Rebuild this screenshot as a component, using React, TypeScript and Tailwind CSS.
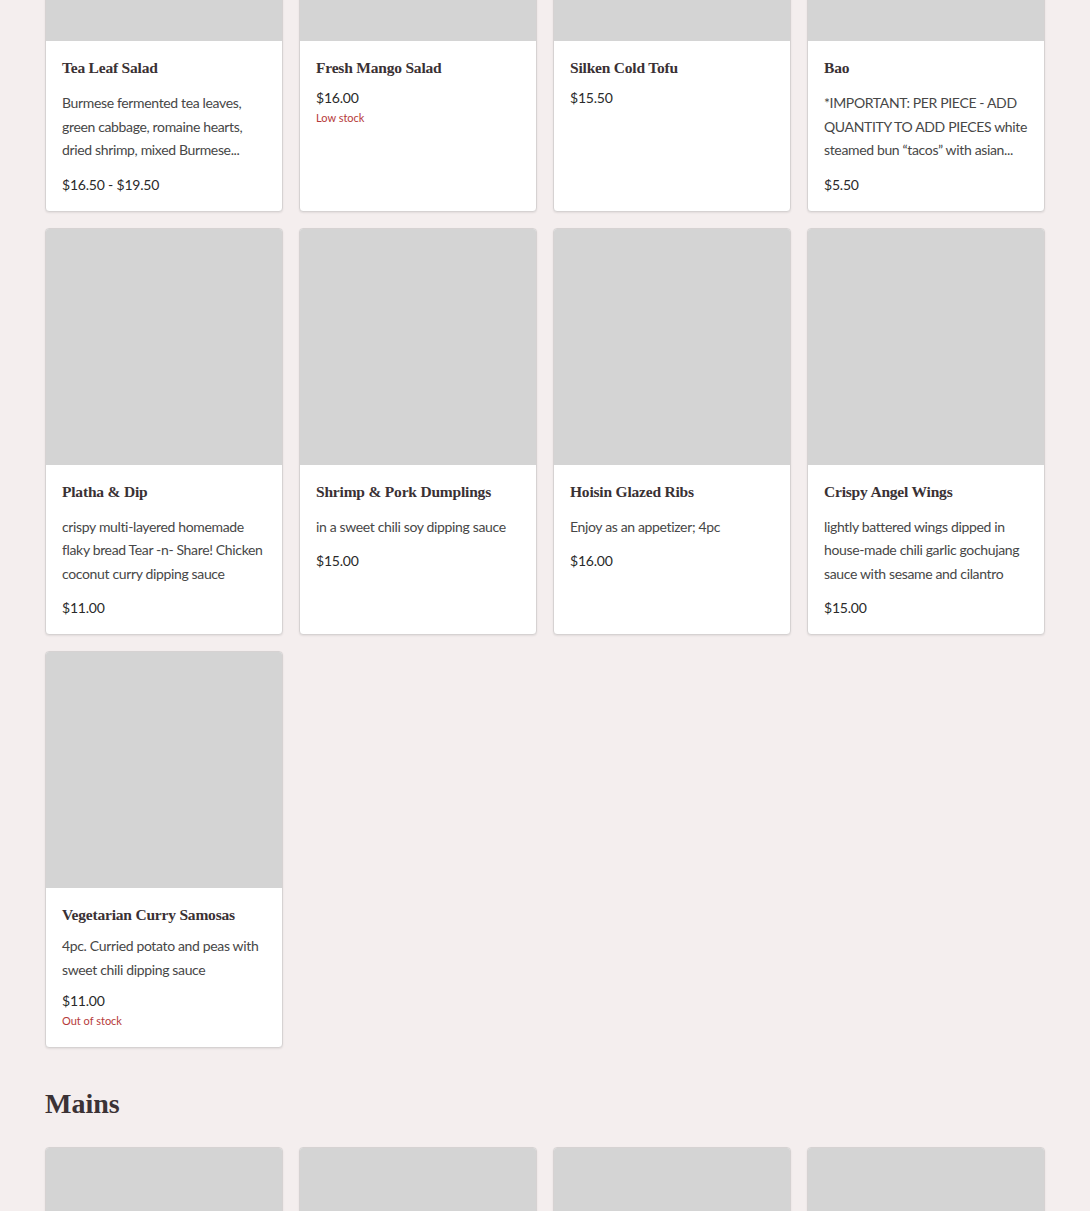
import React from "react";

type Item = {
  name: string;
  description?: string;
  price: string;
  stock?: string;
  tight?: boolean;
};

const starters: Item[] = [
  {
    name: "Tea Leaf Salad",
    description:
      "Burmese fermented tea leaves, green cabbage, romaine hearts, dried shrimp, mixed Burmese...",
    price: "$16.50 - $19.50",
  },
  { name: "Fresh Mango Salad", price: "$16.00", stock: "Low stock" },
  { name: "Silken Cold Tofu", price: "$15.50" },
  {
    name: "Bao",
    description:
      "*IMPORTANT: PER PIECE - ADD QUANTITY TO ADD PIECES white steamed bun “tacos” with asian...",
    price: "$5.50",
  },
  {
    name: "Platha & Dip",
    description:
      "crispy multi-layered homemade flaky bread Tear -n- Share! Chicken coconut curry dipping sauce",
    price: "$11.00",
  },
  {
    name: "Shrimp & Pork Dumplings",
    description: "in a sweet chili soy dipping sauce",
    price: "$15.00",
  },
  {
    name: "Hoisin Glazed Ribs",
    description: "Enjoy as an appetizer; 4pc",
    price: "$16.00",
  },
  {
    name: "Crispy Angel Wings",
    description:
      "lightly battered wings dipped in house-made chili garlic gochujang sauce with sesame and cilantro",
    price: "$15.00",
  },
  {
    name: "Vegetarian Curry Samosas",
    description: "4pc. Curried potato and peas with sweet chili dipping sauce",
    price: "$11.00",
    stock: "Out of stock",
    tight: true,
  },
];

const mains: Item[] = [
  { name: "Garlic Noodles", price: "$18.00" },
  { name: "Nan Gyi Thoke", price: "$19.00" },
  { name: "Coconut Chicken Noodle Soup", price: "$18.50" },
  { name: "Mohinga", price: "$18.00" },
];

const serif = "font-['Liberation_Serif',serif]";
const sans = "font-['Lato',sans-serif]";

function MenuCard({ item }: { item: Item }) {
  let priceGap = "mt-[9px]";
  if (item.description) priceGap = item.tight ? "mt-[10px]" : "mt-[13px]";
  return (
    <div className="flex flex-col overflow-hidden rounded-[4px] border border-[#d6d2d2] bg-white shadow-[0_1px_2px_rgba(0,0,0,0.08)]">
      <div className="aspect-square w-full bg-[#d4d4d4]" />
      <div className="flex flex-col p-4">
        <h3
          className={`${serif} text-[15.5px] leading-[22px] font-bold tracking-[-0.2px] text-[#3a3134]`}
        >
          {item.name}
        </h3>
        {item.description && (
          <p
            className={`${sans} text-[14px] leading-[23.5px] tracking-[-0.35px] text-[#474747] ${
              item.tight ? "mt-[8px]" : "mt-[12px]"
            }`}
          >
            {item.description}
          </p>
        )}
        <div
          className={`${sans} text-[14px] leading-5 tracking-[-0.2px] text-[#2a2a2a] ${priceGap}`}
        >
          {item.price}
        </div>
        {item.stock && (
          <div className={`${sans} text-[11px] leading-5 text-[#b63a3a]`}>
            {item.stock}
          </div>
        )}
      </div>
    </div>
  );
}

export default function App() {
  return (
    <div className="min-h-screen overflow-hidden bg-[#f4eeee]">
      <div className="mx-auto -mt-[196px] w-[1000px]">
        <div className="grid grid-cols-4 gap-4">
          {starters.map((item) => (
            <MenuCard key={item.name} item={item} />
          ))}
        </div>
        <h2
          className={`${serif} mt-[38px] mb-[25px] text-[28px] leading-9 font-bold text-[#3b3235]`}
        >
          Mains
        </h2>
        <div className="grid grid-cols-4 gap-4">
          {mains.map((item) => (
            <MenuCard key={item.name} item={item} />
          ))}
        </div>
      </div>
    </div>
  );
}
